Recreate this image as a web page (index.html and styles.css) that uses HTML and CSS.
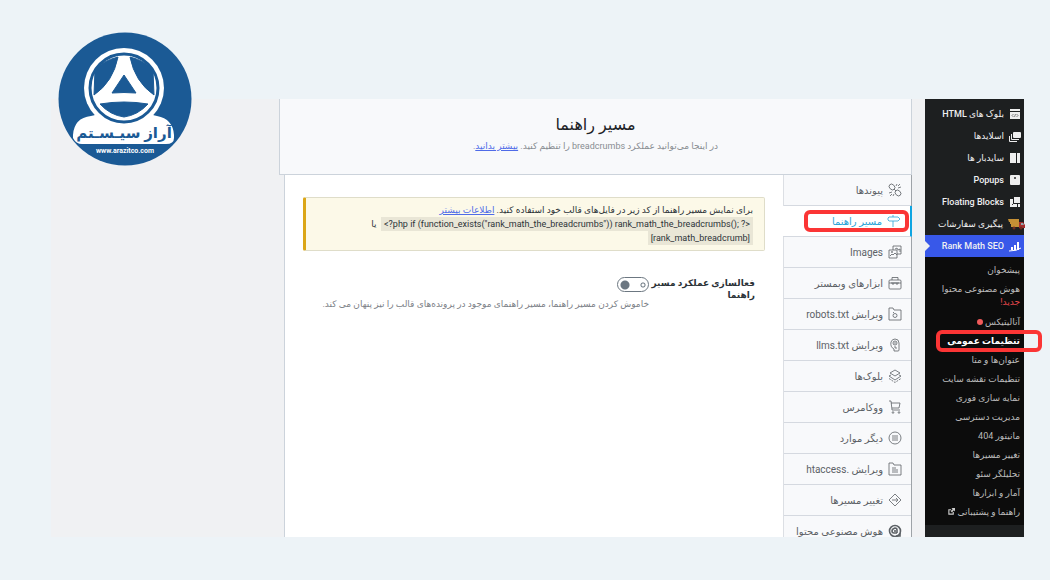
FILE: index.html
```html
<!DOCTYPE html>
<html lang="fa" dir="rtl">
<head>
  <meta charset="UTF-8">
  <meta name="viewport" content="width=device-width, initial-scale=1.0">
  <title>مسیر راهنما</title>
  <link rel="stylesheet" href="styles.css">
</head>
<body>

  <svg class="logo" viewBox="0 0 134 134" role="img" aria-label="آراز سیستم">
    <circle cx="67" cy="67" r="66.500" fill="#1b5a95"/>
    <circle cx="66" cy="56" r="40" fill="#fff"/>
    <path d="M15 108V103Q16 86 33 84Q40 83 43 76H89Q92 83 99 84Q115 87 116 103V106Q116 112 108 112H24Q18 112 15 106Z" fill="#fff"/>
    <circle cx="66" cy="56" r="34" fill="none" stroke="#1b5a95" stroke-width="3"/>
    <path d="M60 25Q44 29 37 38L36 63Q55 50 60 25ZM72 25Q88 29 95 38L96 63Q77 50 72 25ZM42 72Q66 68 90 72Q80 83 66 85Q52 83 42 72ZM66 43L54 61Q66 60 78 61Z" fill="#1b5a95" stroke="#1b5a95" stroke-linejoin="round"/>
    <text x="66" y="106" direction="rtl" text-anchor="middle" class="logo-name">آراز سیـسـتم</text>
    <text x="67" y="121" direction="ltr" text-anchor="middle" class="logo-url">www.arazitco.com</text>
  </svg>

  <div class="screen">
    <aside class="admin-menu">
      <ul class="menu">
        <li><a href="#"><svg viewBox="0 0 12 12"><path fill="#eee" d="M1 1h10v2H1zM1 4h10v7H1z"/><path d="M4.500 6L3 7.500 4.500 9M7.500 6L9 7.500 7.500 9M6.500 6l-1 3" stroke="#555" stroke-width=".7" fill="none"/></svg>بلوک های HTML</a></li>
        <li><a href="#"><svg viewBox="0 0 12 12"><rect x="4" y="2" width="8" height="6" rx="1" fill="#eee"/><path d="M2.500 4v5.500H10M.5 6v5.500H8" stroke="#eee" fill="none"/></svg>اسلایدها</a></li>
        <li><a href="#"><svg viewBox="0 0 12 12"><path fill="#eee" d="M1 1h6v10H1zM8 1h3v10H8z"/></svg>سایدبار ها</a></li>
        <li><a href="#"><svg viewBox="0 0 12 12"><rect x="1" y="1" width="10" height="10" rx="1" fill="#eee"/><path d="M5 3l2 2M7 3L5 5" stroke="#333" stroke-width=".8"/></svg>Popups</a></li>
        <li><a href="#"><svg viewBox="0 0 12 12"><path fill="#eee" d="M5 1h6v6H5zM1 3h3v5h4v3H1zM9 8h2v3H9z"/><path d="M3 9l2-2" stroke="#333"/></svg>Floating Blocks</a></li>
        <li><a href="#"><svg class="truck" viewBox="0 0 17 12"><path fill="#c69035" d="M0 1h11v8H3V6H2V4H1z"/><path fill="#a52e2e" d="M11 4h4l2 3v3h-6z"/><path fill="#91a8b0" d="M13 5h2l1 2h-3z"/><circle cx="6" cy="10" r="1.500" fill="#702c20"/><circle cx="13" cy="10" r="1.500" fill="#702c20"/></svg>پیگیری سفارشات</a></li>
        <li class="current"><a href="#"><svg viewBox="0 0 12 12"><path fill="#fff" d="M2 7h2v3H2zM5 5h2v5H5zM8 2h2v8H8z"/><path d="M0 11q8 0 12-3" stroke="#fff" fill="none"/></svg>Rank Math SEO</a></li>
      </ul>
      <ul class="submenu">
        <li><a href="#">پیشخوان</a></li>
        <li class="two-line"><a href="#">هوش مصنوعی محتوا <span class="new">جدید!</span></a></li>
        <li><a href="#">آنالیتیکس<span class="dot"></span></a></li>
        <li class="active marked"><a href="#">تنظیمات عمومی</a></li>
        <li><a href="#">عنوان‌ها و متا</a></li>
        <li><a href="#">تنظیمات نقشه سایت</a></li>
        <li><a href="#">نمایه سازی فوری</a></li>
        <li><a href="#">مدیریت دسترسی</a></li>
        <li><a href="#">مانیتور 404</a></li>
        <li><a href="#">تغییر مسیرها</a></li>
        <li><a href="#">تحلیلگر سئو</a></li>
        <li><a href="#">آمار و ابزارها</a></li>
        <li><a href="#">راهنما و پشتیبانی <svg class="external" viewBox="0 0 8 8"><path d="M3.500 2H1v5h5V4.500" fill="none" stroke="#ccc" stroke-width="1.300"/><path d="M4 0h4v4L6.700 2.700 4.500 5 3 3.500l2.300-2.200z" fill="#ccc"/></svg></a></li>
      </ul>
    </aside>

    <main class="page">
      <header class="page-header">
        <h1>مسیر راهنما</h1>
        <p>در اینجا می‌توانید عملکرد breadcrumbs را تنظیم کنید. <a href="#">بیشتر بدانید</a>.</p>
      </header>

      <div class="panel">
        <nav class="tabs">
          <a href="#"><svg viewBox="0 0 14 14"><ellipse cx="4" cy="4" rx="2.500" ry="3.200" transform="rotate(-45 4 4)"/><ellipse cx="10" cy="10" rx="2.500" ry="3.200" transform="rotate(-45 10 10)"/><path d="M6 6l2 2M8 3l1-2M10 5l3-1M10 3l2-2M4 9l-3 1M6 11l-1 2M4 11l-2 2"/></svg>پیوندها</a>
          <a href="#" class="active marked"><svg viewBox="0 0 14 14"><path d="M2 3h9l2 2-2 2H2L1 6V4zM6 1v2M6 7v6"/></svg>مسیر راهنما</a>
          <a href="#"><svg viewBox="0 0 14 14"><path d="M5 5V1h8v8H9M1 5h8v8H1zM2 11l2-2 1 1 2-2 2 2M7 4l2-1 1 2 2-1v3"/><circle cx="4" cy="7" r=".6"/></svg>Images</a>
          <a href="#"><svg viewBox="0 0 14 14"><rect x="1" y="4" width="12" height="9" rx="1"/><path d="M4 4V1.500h6V4M1 7h12M4 6v2h2V6M8 6v2h2V6"/></svg>ابزارهای وبمستر</a>
          <a href="#"><svg viewBox="0 0 14 14"><path d="M1 1h4l1 2h7v10H1z"/><circle cx="7" cy="8.500" r="2"/><path d="M5 5l1 1"/></svg>ویرایش robots.txt</a>
          <a href="#"><svg viewBox="0 0 14 14"><path d="M7 1q4 0 4 4v7q0 1-1 1H6v-2Q2 9 3 4q1-3 4-3z"/><circle cx="7" cy="5" r="2"/><path d="M7 4v2M7 8v2h2"/></svg>ویرایش llms.txt</a>
          <a href="#"><svg viewBox="0 0 14 14"><path d="M7 1l5 3-5 3-5-3z"/><path d="M3 6L1 7l6 4 6-4-2-1"/><path d="M1 9.500l6 4 6-4" stroke-dasharray="2 1"/></svg>بلوک‌ها</a>
          <a href="#"><svg viewBox="0 0 14 14"><path d="M1 1h2l1 9h8M3 3h9l-1 5H4"/><circle cx="5" cy="12.500" r=".8"/><circle cx="11" cy="12.500" r=".8"/></svg>ووکامرس</a>
          <a href="#"><svg viewBox="0 0 14 14"><circle cx="7" cy="7" r="6"/><path d="M4 5h6M4 7h6M4 9h6"/></svg>دیگر موارد</a>
          <a href="#"><svg viewBox="0 0 14 14"><path d="M1 1h4l1 2h7v10H1zM4 6h4M4 8h6M4 10h6"/></svg>ویرایش .htaccess</a>
          <a href="#"><svg viewBox="0 0 14 14"><path d="M7 1l6 6-6 6-6-6zM4 7h5M8 5l2 2-2 2"/></svg>تغییر مسیرها</a>
          <a href="#"><svg class="bold" viewBox="0 0 14 14"><circle cx="7" cy="7" r="5.500"/><path d="M9 9H6q-2 0-2-2t3-3q2 0 2 2v3M7 6v2M12 9v3H8"/></svg>هوش مصنوعی محتوا</a>
        </nav>

        <section class="content">
          <div class="notice">
            برای نمایش مسیر راهنما از کد زیر در فایل‌های قالب خود استفاده کنید. <a href="#">اطلاعات بیشتر</a><br>
            <code dir="ltr">&lt;?php if (function_exists("rank_math_the_breadcrumbs")) rank_math_the_breadcrumbs(); ?&gt;</code>&nbsp; یا<br>
            <code dir="ltr">[rank_math_breadcrumb]</code>
          </div>

          <div class="field">
            <label for="breadcrumbs">فعالسازی عملکرد مسیر راهنما</label>
            <div class="control">
              <input type="checkbox" id="breadcrumbs" class="switch">
              <p>خاموش کردن مسیر راهنما، مسیر راهنمای موجود در پرونده‌های قالب را نیز پنهان می کند.</p>
            </div>
          </div>
        </section>
      </div>
    </main>
  </div>

</body>
</html>
```

FILE: styles.css
```css
* {
  box-sizing: border-box;
}

body {
  margin: 0;
  padding: 99px 26px 43px 51px;
  height: 100vh;
  background: #edf3f7;
  font-family: Roboto, "DejaVu Sans", sans-serif;
  font-size: 9px;
  color: #2c3338;
}

ul, p, h1 {
  margin: 0;
  padding: 0;
  list-style: none;
}

.logo {
  position: absolute;
  left: 58px;
  top: 32px;
  width: 134px;
  height: 134px;
}

.logo-name {
  font-size: 15px;
  font-weight: bold;
  fill: #1b5a95;
}

.logo-url {
  font-size: 7px;
  font-weight: bold;
  fill: #fff;
}

.screen {
  display: flex;
  gap: 13px;
  height: 100%;
  background: #f0f1f3;
}

/* admin menu */
.admin-menu {
  flex: 0 0 99px;
  padding-top: 4px;
  background: #1d1f20;
}

.menu a {
  display: flex;
  align-items: center;
  gap: 5px;
  height: 22px;
  padding-right: 3px;
  color: #f0f0f1;
  font-weight: 500;
  text-decoration: none;
  white-space: nowrap;
}

.menu svg {
  flex: none;
  width: 12px;
  height: 12px;
}

.menu .truck {
  width: 17px;
  margin-right: -4px;
}

.menu .current {
  position: relative;
  background: #3858e9;
}

.menu .current::after {
  content: "";
  position: absolute;
  left: 0;
  top: 6px;
  border: 5px solid transparent;
  border-left-color: #f0f0f1;
  border-right: 0;
}

.submenu {
  padding: 4px 0 3px;
  background: #0c0c0c;
}

.submenu li {
  height: 19px;
  padding: 0 4px;
  line-height: 19px;
  white-space: nowrap;
}

.submenu a {
  color: #bbb;
  text-decoration: none;
}

.submenu .two-line {
  height: 33px;
  padding-top: 3px;
  line-height: 13px;
}

.submenu .new {
  display: block;
  color: #e5484d;
}

.submenu .dot {
  display: inline-block;
  width: 6px;
  height: 6px;
  margin-right: 2px;
  border-radius: 50%;
  background: #f05a5a;
}

.submenu .active a {
  color: #fff;
  font-weight: bold;
}

.external {
  width: 7px;
  height: 7px;
}

/* red marker around the chosen entries */
.marked {
  position: relative;
}

.marked::before {
  content: "";
  position: absolute;
  border: 4px solid #fb3535;
  border-radius: 6px;
}

.submenu .marked::before {
  inset: -2px -18px -1px 11px;
}

/* page */
.page {
  flex: 1;
  display: flex;
  flex-direction: column;
  min-width: 0;
  margin-left: 228px;
}

.page-header {
  flex: none;
  height: 76px;
  padding-top: 14px;
  border: 1px solid #ccd3db;
  border-top: 0;
  background: #f8f9fb;
  text-align: center;
  color: #888d92;
}

.page-header h1 {
  font-size: 16px;
  font-weight: 500;
  line-height: 24px;
  color: #1d2327;
}

.page-header p {
  line-height: 18px;
}

.page-header a, .notice a {
  color: #4f6be8;
}

.panel {
  flex: 1;
  display: flex;
  min-height: 0;
  margin-left: 5px;
  overflow: hidden;
  border-left: 1px solid #ccd3db;
  background: #fff;
}

.tabs {
  flex: 0 0 129px;
  border-right: 1px solid #9ea3a8;
  border-left: 1px solid #dcdfe4;
  background: #f8f9fb;
}

.tabs a {
  display: flex;
  align-items: center;
  gap: 5px;
  height: 31px;
  padding-right: 9px;
  border-bottom: 1px solid #d5d9e0;
  font-size: 10px;
  color: #5c6166;
  text-decoration: none;
  white-space: nowrap;
}

.tabs svg {
  flex: none;
  width: 14px;
  height: 14px;
  fill: none;
  stroke: currentColor;
  stroke-width: 0.800;
}

.tabs .bold {
  stroke-width: 1.600;
}

.tabs .active {
  margin-left: -1px;
  margin-right: -1px;
  border-right: 2px solid #0fa5e2;
  background: #fff;
  color: #2ba4d8;
}

.tabs .marked::before {
  inset: 4px 1px 4px 21px;
}

.content {
  flex: 1;
  min-width: 0;
  padding: 22px 18px;
}

.notice {
  min-height: 54px;
  padding: 5px 11px;
  border: 1px solid #dfddc9;
  border-left: 3px solid #dba617;
  border-radius: 2px;
  background: #fcf9e8;
  line-height: 14px;
}

.notice code {
  padding: 2px 3px;
  background: #e9e6d6;
  font-family: inherit;
}

.field {
  display: flex;
  padding: 26px 10px;
}

.field label {
  flex: 0 0 106px;
  font-weight: bold;
  line-height: 12px;
}

.control {
  flex: 1;
  color: #7c8187;
}

.control p {
  margin-top: 5px;
  line-height: 14px;
  white-space: nowrap;
}

.switch {
  display: block;
  appearance: none;
  width: 32px;
  height: 15px;
  margin: 0;
  border: 1px solid #6c7781;
  border-radius: 8px;
  background:
    radial-gradient(circle at 7px 7px, #6c7781 4px, transparent 5px),
    radial-gradient(circle at 25px 7px, transparent 1px, #6c7781 2px, transparent 3px);
}
```
